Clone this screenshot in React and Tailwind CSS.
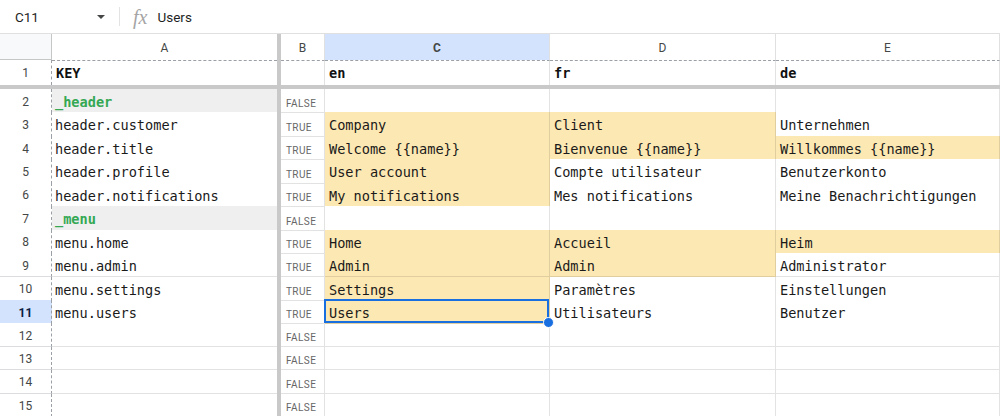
import React from "react";

const GRID = "grid grid-cols-[52px_225px_4px_44px_225px_226px_1fr]";
const MONO = "font-['DejaVu_Sans_Mono',monospace]";
const SANS = "font-['Roboto',Arial,sans-serif]";
const YEL = "bg-[#fce8b2]";

const rows = [
  { n: 2, a: "_header", section: true, b: "FALSE" },
  { n: 3, a: "header.customer", b: "TRUE", c: "Company", d: "Client", e: "Unternehmen", y: [1, 1, 0] },
  { n: 4, a: "header.title", b: "TRUE", c: "Welcome {{name}}", d: "Bienvenue {{name}}", e: "Willkommes {{name}}", y: [1, 1, 1] },
  { n: 5, a: "header.profile", b: "TRUE", c: "User account", d: "Compte utilisateur", e: "Benutzerkonto", y: [1, 0, 0] },
  { n: 6, a: "header.notifications", b: "TRUE", c: "My notifications", d: "Mes notifications", e: "Meine Benachrichtigungen", y: [1, 0, 0] },
  { n: 7, a: "_menu", section: true, b: "FALSE" },
  { n: 8, a: "menu.home", b: "TRUE", c: "Home", d: "Accueil", e: "Heim", y: [1, 1, 1] },
  { n: 9, a: "menu.admin", b: "TRUE", c: "Admin", d: "Admin", e: "Administrator", y: [1, 1, 0] },
  { n: 10, a: "menu.settings", b: "TRUE", c: "Settings", d: "Paramètres", e: "Einstellungen", y: [1, 0, 0] },
  { n: 11, a: "menu.users", b: "TRUE", c: "Users", d: "Utilisateurs", e: "Benutzer", y: [1, 0, 0], selected: true },
  { n: 12, b: "FALSE" },
  { n: 13, b: "FALSE" },
  { n: 14, b: "FALSE" },
  { n: 15, b: "FALSE" },
];

function TextCell({ children, yellow, selected }) {
  return (
    <div
      className={`relative flex items-center pt-[3px] pl-[4px] border-b border-r border-[#0000001c] whitespace-nowrap text-[13.6px] text-[#1a1a1a] ${MONO} ${
        yellow ? YEL : "bg-white"
      } ${selected ? "z-10" : ""}`}
    >
      {children}
      {selected && (
        <div className="absolute -top-px -left-px right-0 bottom-0 border-2 border-[#1a6fe0] pointer-events-none">
          <div className="absolute -right-[7px] -bottom-[7px] w-[11px] h-[11px] rounded-full bg-[#1a6fe0] border border-white" />
        </div>
      )}
    </div>
  );
}

function DataRow({ r }) {
  const y = r.y || [0, 0, 0];
  return (
    <div className={`${GRID} h-[23.45px]`}>
      <div
        className={`flex items-center justify-center pt-[2px] border-b border-b-[#dadce0] border-r border-r-[#9aa0a6] [border-right-style:dashed] text-[12px] ${SANS} ${
          r.selected ? "bg-[#d3e3fd] font-bold text-[#0b1f44]" : "bg-white text-[#444746]"
        }`}
      >
        {r.n}
      </div>
      <div
        className={`flex items-center pt-[3px] pl-[3px] border-b border-[#e2e2e2] whitespace-nowrap text-[13.6px] ${MONO} ${
          r.section ? "bg-[#efefef] text-[#34a853] font-bold" : "bg-white text-[#1a1a1a]"
        }`}
      >
        {r.a}
      </div>
      <div className="bg-[#c9c9c9]" />
      <div className={`flex items-end pb-[1px] pl-[5px] border-b border-r border-[#e2e2e2] text-[10px] tracking-[0.4px] text-[#666] ${SANS}`}>
        {r.b}
      </div>
      <TextCell yellow={y[0]} selected={r.selected}>{r.c}</TextCell>
      <TextCell yellow={y[1]}>{r.d}</TextCell>
      <TextCell yellow={y[2]}>{r.e}</TextCell>
    </div>
  );
}

export default function App() {
  const headCell = `flex items-center justify-center pt-[1px] border-r border-[#e0e0e0] text-[12px] text-[#444746] ${SANS}`;
  const r1Cell = `flex items-center pl-[4px] border-r border-r-[#e2e2e2] border-t border-t-[#9aa0a6] [border-top-style:dashed] font-bold text-[13.6px] text-[#111] ${MONO}`;
  return (
    <div className="w-[1000px] h-[416px] overflow-hidden bg-white">
      {/* formula bar */}
      <div className={`flex items-center h-[34px] border-b border-[#e0e0e0] ${SANS}`}>
        <div className="flex items-center w-[119px] h-full pt-[1px]">
          <span className="pl-[15px] text-[13.5px] text-[#1f1f1f]">C11</span>
          <span className="ml-auto mr-[14px] w-0 h-0 border-l-[4.5px] border-r-[4.5px] border-t-[4.5px] border-l-transparent border-r-transparent border-t-[#444746]" />
        </div>
        <div className="w-px h-[19px] bg-[#e3e3e3]" />
        <span className="ml-[13px] text-[20px] italic text-[#a5a5a5] font-['Liberation_Serif',serif] leading-none">fx</span>
        <span className="ml-[10px] pt-[1px] text-[13.5px] text-[#1f1f1f]">Users</span>
      </div>

      {/* column header */}
      <div className={`${GRID} h-[26px]`}>
        <div className="bg-[#f8f9fa] border-r border-b border-[#c4c7c5]" />
        <div className={`${headCell} border-r-0 bg-white`}>A</div>
        <div className="bg-[#c9c9c9]" />
        <div className={`${headCell} bg-white`}>B</div>
        <div className={`${headCell} bg-[#d3e3fd] font-bold text-[#0b1f44]`}>C</div>
        <div className={`${headCell} bg-white`}>D</div>
        <div className={`${headCell} bg-white`}>E</div>
      </div>

      {/* row 1 */}
      <div className={`${GRID} h-[25px]`}>
        <div className={`flex items-center justify-center border-r border-r-[#9aa0a6] [border-right-style:dashed] text-[12px] text-[#444746] ${SANS}`}>1</div>
        <div className={`${r1Cell} pl-[3px] border-r-0`}>KEY</div>
        <div className="bg-[#c9c9c9]" />
        <div className={`${r1Cell}`} />
        <div className={r1Cell}>en</div>
        <div className={r1Cell}>fr</div>
        <div className={r1Cell}>de</div>
      </div>

      {/* frozen row bar */}
      <div className="h-[4px] bg-[#c9c9c9]" />

      {rows.map((r) => (
        <DataRow key={r.n} r={r} />
      ))}
    </div>
  );
}
